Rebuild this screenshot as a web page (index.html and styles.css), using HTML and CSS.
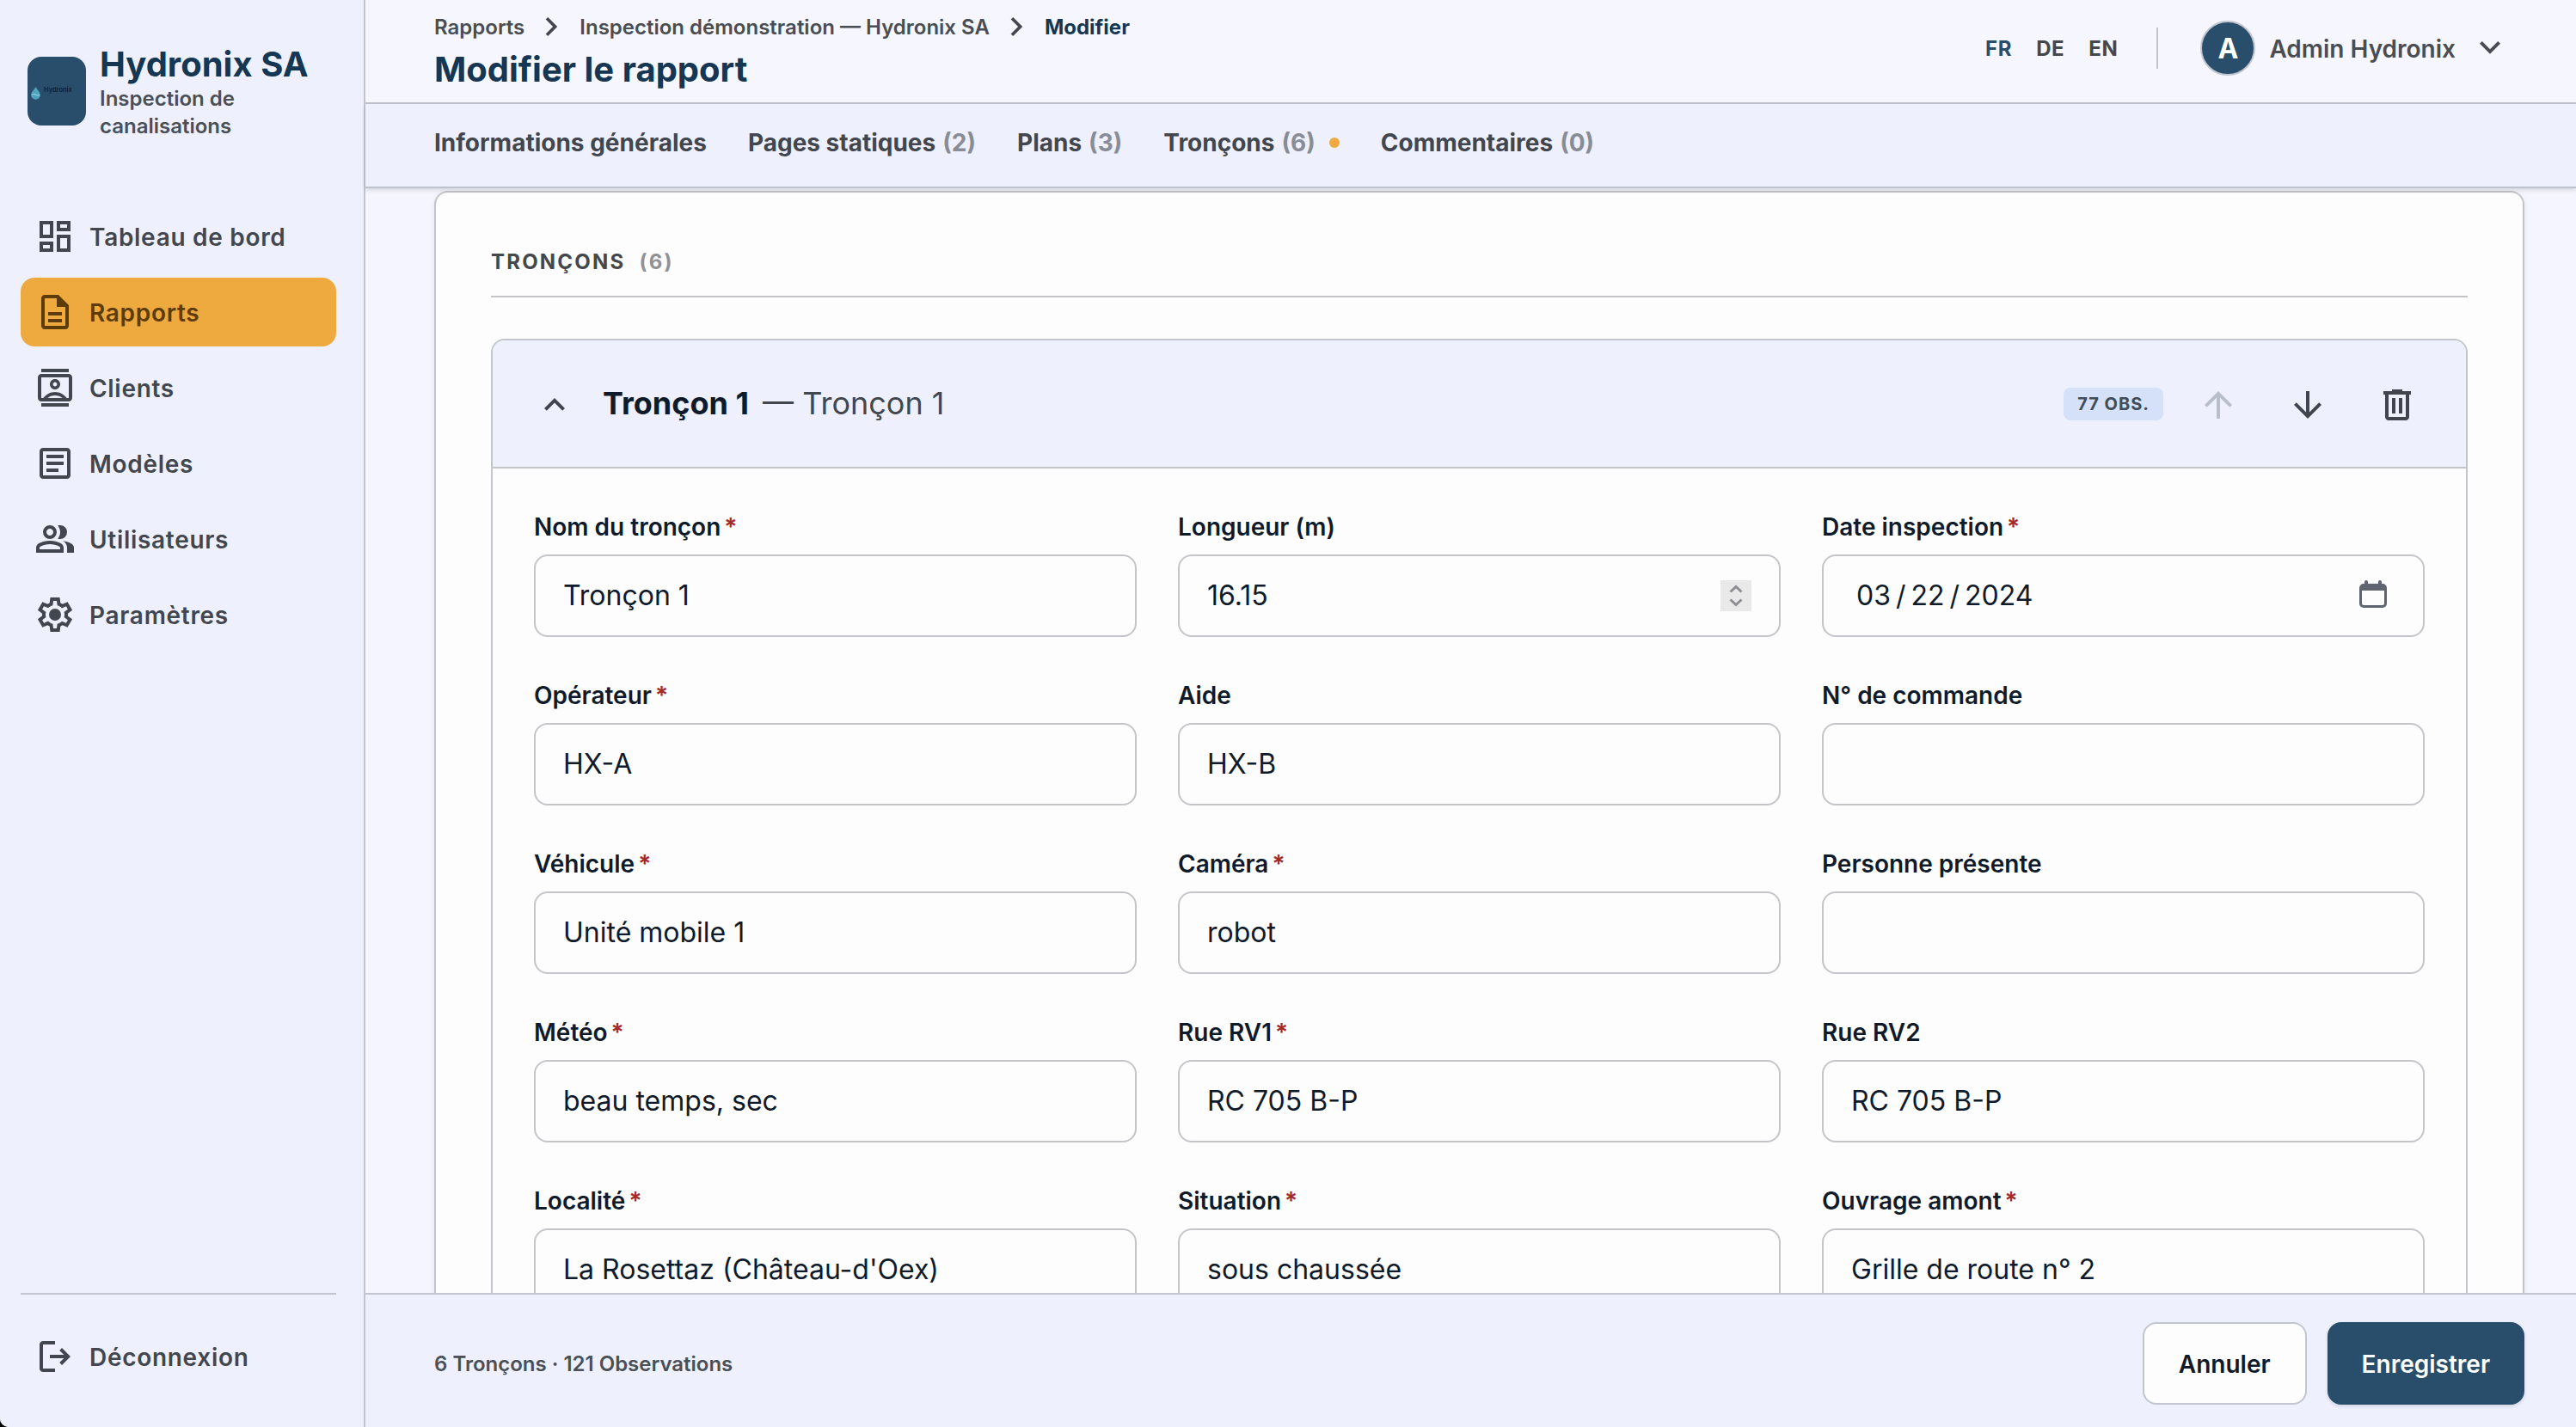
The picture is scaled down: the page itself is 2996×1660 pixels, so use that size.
FILE: index.html
```html
<!DOCTYPE html>
<html lang="fr">
<head>
  <meta charset="UTF-8">
  <meta name="viewport" content="width=device-width, initial-scale=1.0">
  <title>Modifier le rapport</title>
  <link rel="stylesheet" href="styles.css">
</head>
<body>
  <div class="app">
    <aside class="sidebar">
      <div class="brand">
        <div class="brand-logo">
          <svg class="brand-drop" viewBox="0 0 11 15">
            <path d="M5.5 0C7 3 10.8 6 10.8 9.6a5.3 5.1 0 0 1-10.6 0C.2 6 4 3 5.5 0z" fill="#4fa3bd"/>
            <path d="M1.2 9.2c1.6-1 2.9-.8 4.3 0s2.8 1 4.4.1" fill="none" stroke="#b5e4ee" stroke-width=".9"/>
          </svg>
          <span class="brand-mark">Hydronix</span>
        </div>
        <div class="brand-text">
          <div class="brand-name">Hydronix SA</div>
          <div class="brand-sub">Inspection de canalisations</div>
        </div>
      </div>

      <nav class="nav">
        <a class="nav-item" href="#">
          <svg class="icon" viewBox="0 0 24 24"><path d="M19 5v2h-4V5h4M9 5v6H5V5h4m10 8v6h-4v-6h4M9 17v2H5v-2h4M21 3h-8v6h8V3zM11 3H3v10h8V3zm10 8h-8v10h8V11zm-10 4H3v6h8v-6z"/></svg>
          <span>Tableau de bord</span>
        </a>
        <a class="nav-item active" href="#">
          <svg class="icon" viewBox="0 0 24 24"><path d="M8 16h8v2H8zm0-4h8v2H8zm6-10H6c-1.1 0-2 .9-2 2v16c0 1.1.89 2 1.99 2H18c1.1 0 2-.9 2-2V8l-6-6zm4 18H6V4h7v5h5v11z"/></svg>
          <span>Rapports</span>
        </a>
        <a class="nav-item" href="#">
          <svg class="icon" viewBox="0 0 24 24"><path d="M20 4H4c-1.1 0-2 .9-2 2v12c0 1.1.9 2 2 2h16c1.1 0 2-.9 2-2V6c0-1.100-.9-2-2-2zM7.700 18c1.100-.94 2.600-1.500 4.300-1.500s3.200.56 4.300 1.500zM20 18h-1.200c-1.500-2.100-4-3.500-6.800-3.500S6.700 15.900 5.200 18H4V6h16zM12 13c1.650 0 3-1.350 3-3s-1.350-3-3-3-3 1.350-3 3 1.350 3 3 3zm0-4.200c.66 0 1.200.54 1.200 1.200s-.54 1.200-1.200 1.200-1.200-.54-1.200-1.200.54-1.200 1.200-1.200zM4 1h16v2H4zM4 21h16v2H4z"/></svg>
          <span>Clients</span>
        </a>
        <a class="nav-item" href="#">
          <svg class="icon" viewBox="0 0 24 24"><path d="M19 5v14H5V5h14m0-2H5c-1.100 0-2 .9-2 2v14c0 1.100.9 2 2 2h14c1.100 0 2-.9 2-2V5c0-1.100-.9-2-2-2zM14 17H7v-2h7v2zm3-4H7v-2h10v2zm0-4H7V7h10v2z"/></svg>
          <span>Modèles</span>
        </a>
        <a class="nav-item" href="#">
          <svg class="icon" viewBox="0 0 24 24"><path d="M1 20v-2.800q0-.85.44-1.560t1.160-1.090q1.550-.78 3.150-1.160T9 13t3.250.39 3.150 1.160q.72.38 1.160 1.090T17 17.200V20zm18 0v-3q0-1.100-.61-2.110T16.650 13.150q1.270.15 2.400.51t2.100.89q.9.500 1.370 1.110T23 17v3zM9 12q-1.650 0-2.830-1.170T5 8t1.170-2.830T9 4t2.830 1.170T13 8t-1.170 2.830T9 12m10-4q0 1.650-1.170 2.830T15 12q-.28 0-.7-.06t-.7-.14q.67-.8 1.040-1.770T15 8t-.36-2.030T13.600 4.200q.35-.13.7-.16T15 4q1.650 0 2.830 1.170T19 8M3 18h12v-.8q0-.28-.14-.5t-.36-.35q-1.350-.67-2.730-1.010T9 15t-2.770.34-2.730 1.010q-.22.13-.36.350t-.14.5zm6-8q.83 0 1.410-.59T11 8t-.59-1.410T9 6t-1.410.59T7 8t.59 1.410T9 10"/></svg>
          <span>Utilisateurs</span>
        </a>
        <a class="nav-item" href="#">
          <svg class="icon" viewBox="0 0 24 24"><path d="m9.250 22-.4-3.200q-.33-.13-.61-.3t-.56-.38L4.700 19.380l-2.750-4.750 2.580-1.950q-.03-.18-.03-.34v-.68q0-.16.03-.34L1.950 9.380 4.700 4.630l2.980 1.250q.27-.2.570-.38t.6-.3l.4-3.200h5.500l.4 3.200q.33.130.61.300t.56.380l2.980-1.250 2.750 4.750-2.580 1.950q.03.180.03.340v.68q0 .16-.05.34l2.580 1.950-2.750 4.750-2.960-1.250q-.27.200-.57.380t-.6.300l-.4 3.200zM11 20h1.980l.35-2.650q.77-.2 1.440-.59t1.210-.94l2.480 1.030.97-1.700-2.150-1.630q.13-.35.18-.74t.05-.78-.05-.78-.18-.74l2.150-1.630-.97-1.700-2.480 1.050q-.55-.57-1.210-.96t-1.440-.59L13 4h-1.980l-.35 2.650q-.77.200-1.440.59t-1.210.94L5.550 7.150l-.97 1.700 2.150 1.600q-.13.380-.18.750t-.05.800q0 .4.050.78t.18.750l-2.150 1.620.97 1.700 2.480-1.050q.55.570 1.210.96t1.440.59z"/><circle cx="12" cy="12" r="3.500"/></svg>
          <span>Paramètres</span>
        </a>
      </nav>

      <div class="sidebar-bottom">
        <a class="nav-item" href="#">
          <svg class="icon" viewBox="0 0 24 24"><path d="M5 21q-.83 0-1.410-.59T3 19V5q0-.83.59-1.410T5 3h7v2H5v14h7v2zm11-4-1.380-1.450L17.170 13H9v-2h8.170l-2.550-2.550L16 7l5 5z"/></svg>
          <span>Déconnexion</span>
        </a>
      </div>
    </aside>

    <div class="main">
      <header class="header">
        <div class="header-left">
          <div class="breadcrumb">
            <span>Rapports</span>
            <svg class="crumb-sep" viewBox="0 0 24 24"><path d="M9.400 18 8 16.600l4.600-4.600L8 7.400 9.400 6l6 6z"/></svg>
            <span>Inspection démonstration — Hydronix SA</span>
            <svg class="crumb-sep" viewBox="0 0 24 24"><path d="M9.400 18 8 16.600l4.600-4.600L8 7.400 9.400 6l6 6z"/></svg>
            <span class="current">Modifier</span>
          </div>
          <h1 class="page-title">Modifier le rapport</h1>
        </div>
        <div class="header-right">
          <div class="langs">
            <a class="lang active" href="#">FR</a>
            <a class="lang" href="#">DE</a>
            <a class="lang" href="#">EN</a>
          </div>
          <div class="divider"></div>
          <div class="user">
            <div class="avatar">A</div>
            <span class="user-name">Admin Hydronix</span>
            <svg class="icon" viewBox="0 0 24 24"><path d="M12 15.400 6 9.400 7.400 8l4.600 4.600L16.600 8 18 9.400z"/></svg>
          </div>
        </div>
      </header>

      <nav class="tabs">
        <a class="tab" href="#">Informations générales</a>
        <a class="tab" href="#">Pages statiques <span class="count">(2)</span></a>
        <a class="tab" href="#">Plans <span class="count">(3)</span></a>
        <a class="tab" href="#">Tronçons <span class="count">(6)</span><i class="dot"></i></a>
        <a class="tab" href="#">Commentaires <span class="count">(0)</span></a>
      </nav>

      <div class="content">
        <section class="card">
          <h2 class="section-title">Tronçons <span class="count">(6)</span></h2>

          <div class="troncon">
            <div class="troncon-head">
              <button class="icon-btn small"><svg class="icon" viewBox="0 0 24 24"><path d="M12 10.800l-4.600 4.600L6 14l6-6 6 6-1.400 1.400z"/></svg></button>
              <div class="troncon-title"><strong>Tronçon 1</strong> — Tronçon 1</div>
              <span class="badge">77 obs.</span>
              <div class="actions">
                <button class="icon-btn disabled"><svg class="icon" viewBox="0 0 24 24"><path d="M11 20V7.800l-5.600 5.600L4 12l8-8 8 8-1.400 1.400L13 7.800V20z"/></svg></button>
                <button class="icon-btn"><svg class="icon" viewBox="0 0 24 24"><path d="M11 4v12.200l-5.600-5.600L4 12l8 8 8-8-1.400-1.400-5.600 5.600V4z"/></svg></button>
                <button class="icon-btn"><svg class="icon" viewBox="0 0 24 24"><path d="M7 21q-.83 0-1.410-.59T5 19V6H4V4h5V3h6v1h5v2h-1v13q0 .83-.59 1.410T17 21zM17 6H7v13h10zM9 17h2V8H9zm4 0h2V8h-2z"/></svg></button>
              </div>
            </div>

            <div class="fields">
              <div class="field">
                <label>Nom du tronçon<b class="req">*</b></label>
                <div class="control"><input type="text" value="Tronçon 1"></div>
              </div>
              <div class="field">
                <label>Longueur (m)</label>
                <div class="control">
                  <input type="text" value="16.15">
                  <svg class="spinner" viewBox="0 0 36 36"><rect width="36" height="36" fill="#e9e9ea"/><path d="M11.500 13.500 18 7.500l6.500 6M11.500 22.500l6.500 6 6.500-6" fill="none" stroke="#8d8d92" stroke-width="3"/></svg>
                </div>
              </div>
              <div class="field">
                <label>Date inspection<b class="req">*</b></label>
                <div class="control">
                  <div class="date"><span>03</span><span>/</span><span>22</span><span>/</span><span>2024</span></div>
                  <svg class="calendar" viewBox="0 0 32 32"><path d="M6 2a2 2 0 0 1 4 0v2h12V2a2 2 0 0 1 4 0v2h1a5 5 0 0 1 5 5v18a5 5 0 0 1-5 5H5a5 5 0 0 1-5-5V9a5 5 0 0 1 5-5h1zM3 12v15a2 2 0 0 0 2 2h22a2 2 0 0 0 2-2V12z" fill="#5f6470"/></svg>
                </div>
              </div>

              <div class="field">
                <label>Opérateur<b class="req">*</b></label>
                <div class="control"><input type="text" value="HX-A"></div>
              </div>
              <div class="field">
                <label>Aide</label>
                <div class="control"><input type="text" value="HX-B"></div>
              </div>
              <div class="field">
                <label>N° de commande</label>
                <div class="control"><input type="text" value=""></div>
              </div>

              <div class="field">
                <label>Véhicule<b class="req">*</b></label>
                <div class="control"><input type="text" value="Unité mobile 1"></div>
              </div>
              <div class="field">
                <label>Caméra<b class="req">*</b></label>
                <div class="control"><input type="text" value="robot"></div>
              </div>
              <div class="field">
                <label>Personne présente</label>
                <div class="control"><input type="text" value=""></div>
              </div>

              <div class="field">
                <label>Météo<b class="req">*</b></label>
                <div class="control"><input type="text" value="beau temps, sec"></div>
              </div>
              <div class="field">
                <label>Rue RV1<b class="req">*</b></label>
                <div class="control"><input type="text" value="RC 705 B-P"></div>
              </div>
              <div class="field">
                <label>Rue RV2</label>
                <div class="control"><input type="text" value="RC 705 B-P"></div>
              </div>

              <div class="field">
                <label>Localité<b class="req">*</b></label>
                <div class="control"><input type="text" value="La Rosettaz (Château-d'Oex)"></div>
              </div>
              <div class="field">
                <label>Situation<b class="req">*</b></label>
                <div class="control"><input type="text" value="sous chaussée"></div>
              </div>
              <div class="field">
                <label>Ouvrage amont<b class="req">*</b></label>
                <div class="control"><input type="text" value="Grille de route n° 2"></div>
              </div>
            </div>
          </div>
        </section>
      </div>

      <footer class="footer">
        <span class="summary">6 Tronçons · 121 Observations</span>
        <div class="footer-actions">
          <button class="btn">Annuler</button>
          <button class="btn btn-primary">Enregistrer</button>
        </div>
      </footer>
    </div>
  </div>
</body>
</html>
```
FILE: styles.css
```css
*,
*:before,
*:after {
  box-sizing: border-box;
}

body {
  margin: 0;
  background: #000;
  font-family: Inter, "Liberation Sans", sans-serif;
  font-size: 28px;
  color: #0f1b2b;
}

a {
  color: inherit;
  text-decoration: none;
}

button,
input {
  font-family: inherit;
  color: inherit;
}

.app {
  display: flex;
  height: 100vh;
  overflow: hidden;
  background: #f4f5fe;
  border-bottom-left-radius: 10px;
}

.icon {
  display: block;
  flex: none;
  width: 48px;
  height: 48px;
  fill: currentColor;
}

/* sidebar */
.sidebar {
  display: flex;
  flex-direction: column;
  flex: none;
  width: 425px;
  padding: 48px 32px 42px 24px;
  background: #eef1fd;
  border-right: 2px solid #c1c5d0;
}

.brand {
  display: flex;
  align-items: center;
  gap: 16px;
  height: 116px;
  padding-left: 8px;
  margin-bottom: 71px;
}

.brand-logo {
  display: flex;
  flex: none;
  width: 68px;
  height: 80px;
  padding: 35px 0 0 4px;
  border-radius: 16px;
  background: #284e6c;
}

.brand-drop {
  width: 11px;
  height: 15px;
  margin-right: 4px;
}

.brand-mark {
  font-size: 7.500px;
  line-height: 7px;
  font-weight: 600;
  color: #0e2035;
}

.brand-text {
  padding-top: 2px;
}

.brand-name {
  font-size: 40px;
  line-height: 48px;
  font-weight: 700;
  color: #163753;
  white-space: nowrap;
}

.brand-sub {
  font-size: 24px;
  line-height: 32px;
  font-weight: 600;
  color: #4a4f58;
}

.nav {
  display: flex;
  flex-direction: column;
  gap: 8px;
}

.nav-item {
  display: flex;
  align-items: center;
  gap: 16px;
  height: 80px;
  padding: 0 16px;
  border-radius: 16px;
  font-weight: 600;
  letter-spacing: 0.7px;
  color: #42474f;
}

.nav-item span {
  padding-top: 2px;
}

.nav-item.active {
  background: #eea93f;
  color: #5d3c06;
}

.sidebar-bottom {
  margin-top: auto;
  padding-top: 32px;
  border-top: 2px solid #c1c5d0;
}

/* header */
.main {
  display: flex;
  flex-direction: column;
  flex: 1;
  min-width: 0;
}

.header {
  display: flex;
  align-items: center;
  justify-content: space-between;
  flex: none;
  height: 121px;
  padding: 0 76px 7px 80px;
  background: #f5f6fe;
  border-bottom: 2px solid #c1c5ce;
}

.header-left {
  padding-top: 2px;
}

.breadcrumb {
  display: flex;
  align-items: center;
  gap: 10px;
  height: 48px;
  font-size: 24px;
  font-weight: 600;
  color: #4a4d52;
}

.breadcrumb .current {
  font-weight: 700;
  color: #163753;
}

.crumb-sep {
  width: 44px;
  height: 44px;
  fill: #44474c;
}

.page-title {
  margin: 0;
  font-size: 40px;
  line-height: 52px;
  font-weight: 700;
  color: #163753;
}

.header-right {
  display: flex;
  align-items: center;
}

.langs {
  display: flex;
  gap: 28px;
  font-size: 24px;
  font-weight: 700;
  letter-spacing: 0.6px;
  color: #44474c;
}

.lang.active {
  color: #284e6c;
}

.divider {
  width: 2px;
  height: 48px;
  margin: 0 49px 0 45px;
  background: #c3c6cf;
}

.user {
  display: flex;
  align-items: center;
  gap: 16px;
  font-weight: 600;
  color: #4a4d52;
}

.user-name {
  padding-top: 2px;
}

.avatar {
  display: flex;
  align-items: center;
  justify-content: center;
  width: 64px;
  height: 64px;
  border: 2px solid #c1c5d0;
  border-radius: 50%;
  background: #284e6c;
  color: #fff;
  font-size: 32px;
  font-weight: 700;
}

/* tabs */
.tabs {
  position: relative;
  z-index: 1;
  display: flex;
  align-items: center;
  gap: 48px;
  flex: none;
  height: 98px;
  padding: 0 80px 6px;
  background: #eef1fd;
  border-bottom: 2px solid #bcc3cd;
  box-shadow: 0 2px 5px rgba(0, 0, 0, 0.14);
  font-weight: 700;
  color: #42474f;
}

.tab {
  display: flex;
  align-items: center;
  gap: 8px;
}

.count {
  color: #878c96;
}

.dot {
  width: 12px;
  height: 12px;
  margin-left: 8px;
  border-radius: 50%;
  background: #eea93f;
}

/* content */
.content {
  flex: 1;
  min-height: 0;
  overflow: hidden;
  padding: 3px 60px 0 80px;
}

.card {
  padding: 64px;
  border: 2px solid #c2c5ca;
  border-radius: 16px;
  background: #fdfdfe;
  box-shadow: 0 2px 6px rgba(0, 0, 0, 0.08);
}

.section-title {
  display: flex;
  gap: 16px;
  height: 58px;
  margin: 0 0 48px;
  border-bottom: 2px solid #c3c5c9;
  font-size: 24px;
  line-height: 34px;
  font-weight: 700;
  letter-spacing: 2.200px;
  text-transform: uppercase;
  color: #44474c;
}

.section-title .count {
  color: #8f9195;
}

.troncon {
  border: 2px solid #c2c5ca;
  border-radius: 16px;
  overflow: hidden;
}

.troncon-head {
  display: flex;
  align-items: center;
  height: 149px;
  padding: 0 32px;
  background: #eef1fd;
  border-bottom: 2px solid #c2c5ca;
}

.troncon-title {
  flex: 1;
  padding: 0 0 2px 16px;
  font-size: 36px;
  color: #42474f;
}

.troncon-title strong {
  margin-right: 6px;
  font-weight: 700;
  color: #0f1b2b;
}

.badge {
  margin-right: 16px;
  padding: 0 16px;
  border-radius: 8px;
  background: #d5e1f9;
  font-size: 20px;
  line-height: 38px;
  font-weight: 700;
  letter-spacing: 1px;
  text-transform: uppercase;
  color: #414c59;
}

.actions {
  display: flex;
  gap: 8px;
}

.icon-btn {
  display: flex;
  align-items: center;
  justify-content: center;
  width: 96px;
  height: 96px;
  padding: 2px 0 0;
  border: 0;
  background: none;
  color: #3f444d;
}

.icon-btn.small {
  width: 80px;
}

.icon-btn.disabled {
  color: #b9becb;
}

/* form */
.fields {
  display: grid;
  grid-template-columns: repeat(3, 1fr);
  gap: 48px;
  padding: 48px;
}

.field label {
  display: block;
  margin-bottom: 12px;
  line-height: 40px;
  font-weight: 600;
}

.req {
  margin-left: 4px;
  font-weight: 600;
  color: #a32a26;
}

.control {
  display: flex;
  align-items: center;
  height: 96px;
  padding: 0 32px;
  border: 2px solid #c3c5c8;
  border-radius: 16px;
  font-size: 32px;
}

.control input {
  flex: 1;
  min-width: 0;
  padding: 0 0 2px;
  border: 0;
  outline: 0;
  background: none;
  font-size: 32px;
}

.spinner {
  width: 36px;
  height: 36px;
}

.date {
  display: flex;
  flex: 1;
  gap: 6px;
  padding: 0 0 2px 6px;
}

.calendar {
  width: 32px;
  height: 32px;
  margin: 0 10px 4px 0;
}

/* footer */
.footer {
  display: flex;
  align-items: flex-start;
  justify-content: space-between;
  flex: none;
  height: 156px;
  padding: 32px 60px 0 80px;
  background: #eef1fd;
  border-top: 2px solid #c1c5ce;
}

.summary {
  font-size: 24px;
  line-height: 98px;
  font-weight: 600;
  color: #4a4f58;
}

.footer-actions {
  display: flex;
  gap: 24px;
}

.btn {
  height: 96px;
  padding: 2px 40px 0;
  border: 2px solid #c1c5d0;
  border-radius: 16px;
  background: #fdfdfe;
  font-size: 28px;
  font-weight: 600;
  color: #0f1b2b;
}

.btn-primary {
  border-color: #284e6c;
  background: #284e6c;
  box-shadow: 0 2px 4px rgba(0, 0, 0, 0.12);
  color: #fff;
  padding: 2px 38px 0;
}
```
